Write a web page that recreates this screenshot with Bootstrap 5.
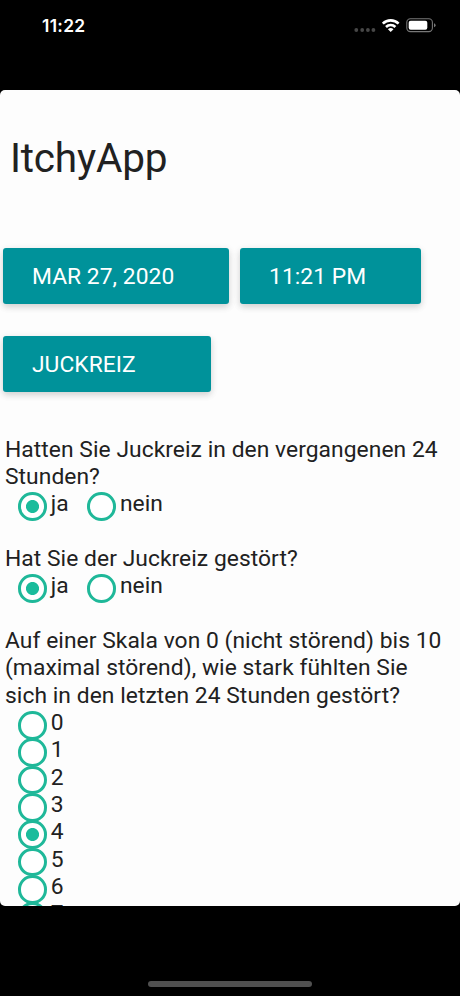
<!DOCTYPE html>
<html lang="de">
<head>
<meta charset="utf-8">
<meta name="viewport" content="width=device-width, initial-scale=1">
<title>ItchyApp</title>
<link href="https://cdn.jsdelivr.net/npm/bootstrap@5.3.0/dist/css/bootstrap.min.css" rel="stylesheet">
<style>
  body { height: 996px; background: #000; font-family: Roboto, "Liberation Sans", sans-serif; color: #212121; }
  .status-bar { height: 90px; padding: 14px 24px 0 42px; color: #fff; }
  .clock { font: 600 17.4px/24px Inter, "Liberation Sans", sans-serif; letter-spacing: .3px; }
  .screen { height: 816px; background: #fdfdfd; border-radius: 5px; }
  .app-title { font-size: 40.5px; line-height: 48px; margin: 44px 0 66.3px 10px; font-weight: 400; letter-spacing: -.2px; }
  .btn-row { padding-left: 3.3px; gap: 11.3px; margin-bottom: 31.7px; }
  .btn-app { --bs-btn-color: #fff; --bs-btn-bg: #00929a; --bs-btn-hover-bg: #00838a; --bs-btn-hover-color: #fff;
    height: 56px; padding: 1px 0 0 28.7px; border: 0; border-radius: 3px; font-size: 22.8px; line-height: 55px; letter-spacing: .05px;
    box-shadow: 0 3px 6px rgba(0,0,0,.13), 0 2px 10px rgba(0,0,0,.07); }
  .w-date { width: 225.8px; } .w-time { width: 180.8px; } .w-kind { width: 208px; }
  .survey { padding-left: 5px; margin-top: 43.6px; font-size: 22.8px; line-height: 27.33px; letter-spacing: .06px; }
  .question { margin-bottom: 27.33px; }
  .choice { height: 27.33px; padding-left: 13px; }
  .choice .form-check-input { flex: none; width: 28.6px; height: 28.6px; margin: 2.1px 4.2px 0 0; border: 3px solid #1fb899; background: #fff; box-shadow: none; }
  .choice .form-check-input:checked { background: radial-gradient(circle, #1abc9c 6.1px, #fff 6.9px); }
  .second { margin-left: 18.4px; }
  .home-bar { width: 164px; height: 6px; background: #505050; margin-top: 75px; }
</style>
</head>
<body class="overflow-hidden">
<header class="status-bar d-flex justify-content-between align-items-start">
  <span class="clock">11:22</span>
  <svg width="84" height="24" viewBox="352 14 84 24" aria-hidden="true">
    <g fill="#474747"><circle cx="356.3" cy="30" r="1.9"/><circle cx="362.2" cy="30" r="1.9"/><circle cx="367.9" cy="30" r="1.9"/><circle cx="373.4" cy="30" r="1.9"/></g>
    <g fill="none" stroke="#fff" stroke-width="2.6"><path d="M382.8 23.6a11.2 11.2 0 0 1 15.8 0"/><path d="M386 27a6.7 6.7 0 0 1 9.4 0"/></g>
    <path d="M387.9 29.3a4 4 0 0 1 5.6 0l-2.8 2.8z" fill="#fff"/>
    <rect x="406.8" y="18.8" width="25.6" height="12.8" rx="3.6" fill="none" stroke="#777" stroke-width="1.1"/>
    <rect x="408.7" y="20.7" width="18.6" height="9" rx="2" fill="#fff"/>
    <path d="M434 23.2q1.6.6 1.6 2t-1.6 2z" fill="#777"/>
  </svg>
</header>
<main class="screen overflow-hidden">
  <div class="d-flex flex-column">
    <h1 class="app-title">ItchyApp</h1>
    <div class="btn-row d-flex">
      <button type="button" class="btn btn-app w-date text-start">MAR 27, 2020</button>
      <button type="button" class="btn btn-app w-time text-start">11:21 PM</button>
    </div>
    <div class="btn-row d-flex mb-0">
      <button type="button" class="btn btn-app w-kind text-start">JUCKREIZ</button>
    </div>
    <form class="survey">
      <div class="question">
        <div>Hatten Sie Juckreiz in den vergangenen 24<br>Stunden?</div>
        <div class="d-flex">
          <label class="choice d-flex"><input class="form-check-input" type="radio" name="itch" checked>ja</label>
          <label class="choice second ps-0 d-flex"><input class="form-check-input" type="radio" name="itch">nein</label>
        </div>
      </div>
      <div class="question">
        <div>Hat Sie der Juckreiz gestört?</div>
        <div class="d-flex">
          <label class="choice d-flex"><input class="form-check-input" type="radio" name="bother" checked>ja</label>
          <label class="choice second ps-0 d-flex"><input class="form-check-input" type="radio" name="bother">nein</label>
        </div>
      </div>
      <div class="question">
        <div>Auf einer Skala von 0 (nicht störend) bis 10<br>(maximal störend), wie stark fühlten Sie<br>sich in den letzten 24 Stunden gestört?</div>
        <label class="choice d-flex"><input class="form-check-input" type="radio" name="scale">0</label>
        <label class="choice d-flex"><input class="form-check-input" type="radio" name="scale">1</label>
        <label class="choice d-flex"><input class="form-check-input" type="radio" name="scale">2</label>
        <label class="choice d-flex"><input class="form-check-input" type="radio" name="scale">3</label>
        <label class="choice d-flex"><input class="form-check-input" type="radio" name="scale" checked>4</label>
        <label class="choice d-flex"><input class="form-check-input" type="radio" name="scale">5</label>
        <label class="choice d-flex"><input class="form-check-input" type="radio" name="scale">6</label>
        <label class="choice d-flex"><input class="form-check-input" type="radio" name="scale">7</label>
      </div>
    </form>
  </div>
</main>
<div class="home-bar rounded-pill mx-auto"></div>
<script src="https://cdn.jsdelivr.net/npm/bootstrap@5.3.0/dist/js/bootstrap.bundle.min.js"></script>
</body>
</html>
